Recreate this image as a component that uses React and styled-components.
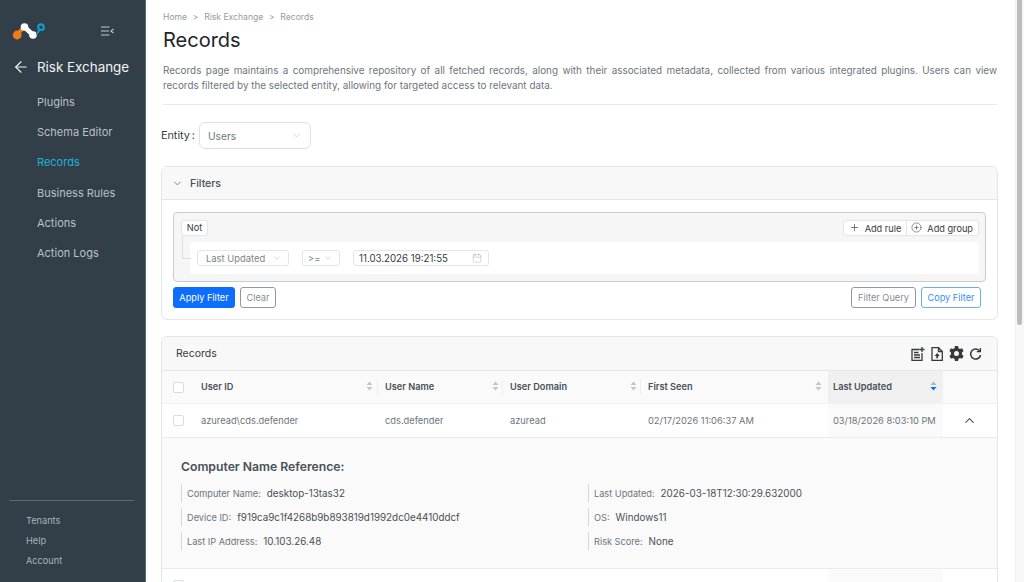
import React from "react";
import styled, { createGlobalStyle } from "styled-components";
import { ArrowLeft, ChevronDown, ChevronUp, Plus, CirclePlus, Calendar } from "lucide-react";

const Global = createGlobalStyle`
  html, body { margin: 0; padding: 0; height: 100%; overflow: hidden; }
  * { box-sizing: border-box; }
  body { font-family: Inter, "Liberation Sans", sans-serif; background: #fff; color: #495057; }
`;
const Shell = styled.div`position: relative; display: flex; height: 582px; width: 1024px; overflow: hidden;`;
const Side = styled.aside`
  width: 146px; flex: none; height: 100%; background: #323f49; border-right: 1px solid #5a6974;
  display: flex; flex-direction: column; padding-top: 20px;
`;
const Brand = styled.div`display: flex; align-items: center; height: 24px; padding-left: 12px; gap: 55px;`;
const Back = styled.div`
  display: flex; align-items: center; gap: 7px; margin-top: 11px; height: 24px; padding-left: 12px;
  color: #f1f3f4; font-size: 13.4px; font-weight: 400;
`;
const Nav = styled.nav`display: flex; flex-direction: column; margin-top: 8px;`;
const NavItem = styled.div`
  height: 30.2px; line-height: 30px; padding-left: 37px; font-size: 11px;
  color: ${p => (p.$active ? "#20b2dc" : "#b9c0c5")};
`;
const Foot = styled.div`
  margin: auto 11px 0 9px; border-top: 1px solid #5c6a74; padding: 10px 0 11px 17px;
  display: flex; flex-direction: column;
`;
const FootItem = styled.div`height: 20px; line-height: 20px; font-size: 9.2px; color: #aab2b8;`;
const Main = styled.main`flex: 1; height: 100%; overflow: hidden; padding: 0 19px 0 15px;`;
const ScrollTrack = styled.div`
  position: absolute; top: 0; right: 0; width: 9px; height: 100%; background: #f8f8f8; border-left: 1px solid #f0f0f0;
`;
const ScrollThumb = styled.div`
  width: 5px; height: 325px; margin-left: 1px; background: #bcbcbc; border-radius: 0 0 3px 3px;
`;
const Crumbs = styled.div`
  padding: 11px 0 0 2px; height: 25px; font-size: 8.6px; line-height: 12px; color: #959ca3;
  display: flex; gap: 5.7px;
`;
const Title = styled.h1`margin: 3px 0 0; font-size: 20px; line-height: 24px; font-weight: 400; color: #212529; padding-left: 2px;`;
const Desc = styled.p`
  margin: 11px 0 0 2px; padding: 0 0 10px 0; border-bottom: 1px solid #e6e8ea;
  font-size: 9.9px; line-height: 15px; color: #6c757d; text-align: justify; width: 834px; height: 42px;
`;
const EntityRow = styled.div`display: flex; align-items: center; margin-top: 17px; gap: 4px;`;
const EntityLabel = styled.label`font-size: 10.8px; color: #343a40; word-spacing: -1px;`;
const EntitySelect = styled.div`
  width: 112px; height: 27px; border: 1px solid #dfe2e5; border-radius: 6px; background: #fff;
  display: flex; align-items: center; justify-content: space-between; padding: 0 8px;
  font-size: 10.2px; color: #6c757d;
`;
const Card = styled.section`
  margin-top: ${p => p.$mt}px; width: 837px; border: 1px solid #e4e6e8; border-radius: 6px; background: #fff; overflow: hidden;
`;
const FilterHead = styled.div`
  height: 33px; background: #f8f8f8; border-bottom: 1px solid #e4e6e8;
  display: flex; align-items: center; gap: 7px; padding-left: 10px;
  font-size: 10.5px; font-weight: 500; color: #495057;
`;
const FilterBody = styled.div`padding: 12px 11px 11px;`;
const Builder = styled.div`
  position: relative; height: 70px; background: #f6f6f6; border: 1px solid #c9cccf; border-radius: 4px;
  padding: 7px 6px 0 7px;
`;
const BuilderTop = styled.div`display: flex; justify-content: space-between; align-items: flex-start;`;
const NotTag = styled.div`
  height: 16px; width: 27px; background: #fff; border: 1px solid #e3e5e7; border-radius: 3px;
  font-size: 9.2px; line-height: 14px; text-align: center; color: #343a40;
`;
const BtnPair = styled.div`display: flex; height: 16px; background: #fff; border: 1px solid #e3e5e7; border-radius: 3px;`;
const PairBtn = styled.div`
  display: flex; align-items: center; gap: 5px; padding: 0 5px 0 5px; font-size: 9.2px; color: #343a40;
  & + & { border-left: 1px solid #e3e5e7; padding-left: 4px; }
  & svg { margin-top: -2px; }
`;
const RuleRow = styled.div`
  position: relative; margin: 6px 0 0 9px; height: 32px; background: #fff; border-radius: 3px;
  display: flex; align-items: center; padding-left: 7px;
  &::before {
    content: ""; position: absolute; left: -8px; top: -6px; width: 8px; height: 22px;
    border-left: 1px solid #dcdfe2; border-bottom: 1px solid #dcdfe2;
  }
`;
const Sel = styled.div`
  width: ${p => p.$w}px; margin-right: ${p => p.$mr}px; height: 16px; border: 1px solid #e3e5e7; border-radius: 3px;
  display: flex; align-items: center; justify-content: space-between; padding: 0 6px 0 ${p => p.$pl}px;
  font-size: ${p => p.$dark ? 9.7 : 9.4}px; color: ${p => p.$dark ? "#343a40" : "#7b838a"}; background: #fff;
`;
const Actions = styled.div`display: flex; align-items: center; justify-content: space-between; margin-top: 5px; padding-right: 5px;`;
const ActionGroup = styled.div`display: flex; gap: 5px;`;
const Btn = styled.button`
  height: 21px; padding: 0; width: ${p => p.$w}px; border-radius: 3px; font-family: inherit; font-size: 9.2px;
  background: ${p => p.$kind === "primary" ? "#0d6efd" : "#fff"};
  color: ${p => p.$kind === "primary" ? "#fff" : p.$kind === "link" ? "#3c8cf6" : "#868e96"};
  border: 1px solid ${p => p.$kind === "primary" ? "#0d6efd" : p.$kind === "link" ? "#6ea8fe" : "#93989d"};
`;
const RecordsHead = styled.div`
  height: 34px; background: #f8f8f8; border-bottom: 1px solid #e4e6e8;
  display: flex; align-items: center; justify-content: space-between; padding: 0 15px 0 14px;
  font-size: 10.5px; color: #343a40;
`;
const Tools = styled.div`display: flex; align-items: center; gap: 5px;`;
const Grid = `display: grid; grid-template-columns: 39px 184px 125px 138px 180px 115px 1fr; align-items: center;`;
const HeadRow = styled.div`${Grid} height: 32px; background: #fafafa; font-size: 9.2px; font-weight: 600; color: #495057;`;
const BodyRow = styled.div`${Grid} height: 35px; background: #fff; border-top: 1px solid #f0f1f2; border-bottom: 1px solid #e9ebec; font-size: 9.3px; color: #6c757d;`;
const Th = styled.div`
  position: relative; height: 100%; display: flex; align-items: center; justify-content: space-between; padding-bottom: 2px;
  padding-right: ${p => p.$pr}px;
  background: ${p => p.$sorted ? "#f0f0f0" : "transparent"};
  padding-left: ${p => p.$sorted ? 5 : 0}px;
  ${p => p.$divided ? `&::after { content: ""; position: absolute; right: 7px; top: 8px; height: 16px; border-right: 1px solid #efefef; }` : ""}
`;
const Td = styled.div`
  height: 100%; display: flex; align-items: center;
  background: ${p => p.$sorted ? "#fafafa" : "transparent"};
  padding-left: ${p => p.$sorted ? 5 : 0}px; white-space: nowrap;
`;
const CheckCell = styled.div`display: flex; align-items: center; padding-left: 11px;`;
const Check = styled.span`display: block; width: 11px; height: 11px; border: 1px solid #d9dcdf; border-radius: 2px; background: #fff;`;
const Chevron = styled.div`display: flex; justify-content: center; padding-right: 2px; color: #495057;`;
const Detail = styled.div`background: #fafafa; height: 131px; padding: 22px 20px 0 19px; border-bottom: 1px solid #e9ebec;`;
const DetailTitle = styled.h3`margin: 0; font-size: 12.2px; line-height: 14px; font-weight: 600; color: #495057;`;
const Columns = styled.div`display: grid; grid-template-columns: 407px 1fr; margin-top: 10px;`;
const Col = styled.div`display: flex; flex-direction: column; gap: 6px;`;
const Field = styled.div`
  height: 18px; border-left: 1px solid #d4d7da; padding-left: 5px; display: flex; align-items: center; gap: 6px;
  font-size: 9.85px; color: #495057; white-space: nowrap;
`;
const FieldLabel = styled.span`color: #6c757d; font-size: 9.2px;`;
const Blank = styled.div`${Grid} height: 40px; background: #fff;`;
const BlankCheck = styled(CheckCell)`align-self: start; padding-top: 11px;`;
const BlankSorted = styled.div`grid-column: 6; height: 100%; background: #fafafa;`;

const Logo = () => (
  <svg width="34" height="24" viewBox="0 0 34 24">
    <path d="M5 15 L11 8" stroke="#f07d18" strokeWidth="3.6" strokeLinecap="round" />
    <circle cx="5.200" cy="15" r="4.400" fill="#f07d18" />
    <path d="M12.500 7 L21 15" stroke="#fff" strokeWidth="4.600" />
    <circle cx="12.500" cy="7" r="3.800" fill="#fff" />
    <circle cx="21" cy="15" r="3.800" fill="#fff" />
    <path d="M25 13.500 L28 9" stroke="#109bc8" strokeWidth="2.200" strokeLinecap="round" />
    <circle cx="29" cy="7.200" r="2.800" fill="#323f49" stroke="#109bc8" strokeWidth="2.200" />
  </svg>
);
const MenuSvg = styled.svg`margin-bottom: 3px;`;
const MenuIcon = () => (
  <MenuSvg width="13" height="10" viewBox="0 0 13 10" fill="none" stroke="#c4cace" strokeWidth="1.100">
    <path d="M0 1h8.500M0 5h8M0 9h8.500M12.500 2.800 10 5l2.500 2.200" />
  </MenuSvg>
);
const Sort = ({ active }) => (
  <svg width="7" height="10" viewBox="0 0 7 10">
    <path d="M3.500 0.500 6.500 4H.5z" fill={active ? "#adb5bd" : "#c2c6ca"} />
    <path d="M3.500 9.500 6.500 6H.5z" fill={active ? "#0d6efd" : "#c2c6ca"} />
  </svg>
);
const ListAdd = () => (
  <svg width="14" height="14" viewBox="0 0 14 14" fill="none" stroke="#343a40" strokeWidth="1.300">
    <path d="M8.500 2.500H1v11h10V6" />
    <path d="M3 5.500h4.500M3 8h6M3 10.500h6" />
    <path d="M11 0v5M8.500 2.500h5" />
  </svg>
);
const FileUp = () => (
  <svg width="14" height="14" viewBox="0 0 14 14" fill="none" stroke="#343a40" strokeWidth="1.300">
    <path d="M2 .7h6.500L12.300 4.500V13.300H2z" />
    <path d="M8.500 .7v3.800h3.800" />
    <path d="M7.200 6 4.600 9h1.700v2.300h1.800V9h1.700z" fill="#343a40" stroke="none" />
  </svg>
);
const Gear = () => (
  <svg width="15" height="15" viewBox="0 0 24 24" fill="#343a40">
    <path fillRule="evenodd" d="M14.500 0h-5l-.7 3.500a9 9 0 0 0-2.300 1.300L3.100 3.700.6 8l2.700 2.400a9 9 0 0 0 0 3.200L.6 16l2.500 4.300 3.400-1.100a9 9 0 0 0 2.300 1.300L9.500 24h5l.7-3.500a9 9 0 0 0 2.300-1.300l3.400 1.100 2.500-4.300-2.700-2.400a9 9 0 0 0 0-3.200L23.400 8l-2.500-4.300-3.400 1.100a9 9 0 0 0-2.300-1.300zM12 8a4 4 0 1 1 0 8 4 4 0 0 1 0-8z" />
  </svg>
);
const Refresh = () => (
  <svg width="13" height="14" viewBox="0 0 13 14" fill="none" stroke="#343a40" strokeWidth="1.500">
    <path d="M10.800 4.200A5 5 0 1 0 11.600 8" />
    <path d="M11.400 1v3.600H7.800" strokeWidth="1.300" />
  </svg>
);

const columns = [
  { label: "User ID", pr: 12, divided: true },
  { label: "User Name", pr: 11, divided: true },
  { label: "User Domain", pr: 11, divided: true },
  { label: "First Seen", pr: 6, divided: false },
];

export default function App() {
  return (
    <Shell>
      <Global />
      <Side>
        <Brand><Logo /><MenuIcon /></Brand>
        <Back><ArrowLeft size={18} strokeWidth={1.500} />Risk Exchange</Back>
        <Nav>
          {["Plugins", "Schema Editor", "Records", "Business Rules", "Actions", "Action Logs"].map(n => (
            <NavItem key={n} $active={n === "Records"}>{n}</NavItem>
          ))}
        </Nav>
        <Foot>
          {["Tenants", "Help", "Account"].map(n => <FootItem key={n}>{n}</FootItem>)}
        </Foot>
      </Side>
      <Main>
        <Crumbs><span>Home</span><span>&gt;</span><span>Risk Exchange</span><span>&gt;</span><span>Records</span></Crumbs>
        <Title>Records</Title>
        <Desc>Records page maintains a comprehensive repository of all fetched records, along with their associated metadata, collected from various integrated plugins. Users can view records filtered by the selected entity, allowing for targeted access to relevant data.</Desc>
        <EntityRow>
          <EntityLabel>Entity :</EntityLabel>
          <EntitySelect>Users<ChevronDown size={11} color="#a8aeb3" strokeWidth={1.200} /></EntitySelect>
        </EntityRow>
        <Card $mt={17}>
          <FilterHead><ChevronDown size={11} strokeWidth={1.500} />Filters</FilterHead>
          <FilterBody>
            <Builder>
              <BuilderTop>
                <NotTag>Not</NotTag>
                <BtnPair>
                  <PairBtn><Plus size={11} strokeWidth={1.400} />Add rule</PairBtn>
                  <PairBtn><CirclePlus size={11} strokeWidth={1.200} />Add group</PairBtn>
                </BtnPair>
              </BuilderTop>
              <RuleRow>
                <Sel $w={92} $mr={13} $pl={8}>Last Updated<ChevronDown size={10} color="#a8aeb3" strokeWidth={1.200} /></Sel>
                <Sel $w={38} $mr={13} $pl={5}>&gt;=<ChevronDown size={10} color="#a8aeb3" strokeWidth={1.200} /></Sel>
                <Sel $w={136} $mr={0} $pl={5} $dark>11.03.2026 19:21:55<Calendar size={10} color="#a8aeb3" strokeWidth={1.200} /></Sel>
              </RuleRow>
            </Builder>
            <Actions>
              <ActionGroup>
                <Btn $kind="primary" $w={62}>Apply Filter</Btn>
                <Btn $w={36}>Clear</Btn>
              </ActionGroup>
              <ActionGroup>
                <Btn $w={65}>Filter Query</Btn>
                <Btn $kind="link" $w={60}>Copy Filter</Btn>
              </ActionGroup>
            </Actions>
          </FilterBody>
        </Card>
        <Card $mt={16}>
          <RecordsHead>
            Records
            <Tools><ListAdd /><FileUp /><Gear /><Refresh /></Tools>
          </RecordsHead>
          <HeadRow>
            <CheckCell><Check /></CheckCell>
            {columns.map(c => <Th key={c.label} $pr={c.pr} $divided={c.divided}>{c.label}<Sort /></Th>)}
            <Th $sorted $pr={6}>Last Updated<Sort active /></Th>
            <div />
          </HeadRow>
          <BodyRow>
            <CheckCell><Check /></CheckCell>
            <Td>azuread\cds.defender</Td>
            <Td>cds.defender</Td>
            <Td>azuread</Td>
            <Td>02/17/2026 11:06:37 AM</Td>
            <Td $sorted>03/18/2026 8:03:10 PM</Td>
            <Chevron><ChevronUp size={15} strokeWidth={1.800} /></Chevron>
          </BodyRow>
          <Detail>
            <DetailTitle>Computer Name Reference:</DetailTitle>
            <Columns>
              <Col>
                <Field><FieldLabel>Computer Name:</FieldLabel>desktop-13tas32</Field>
                <Field><FieldLabel>Device ID:</FieldLabel>f919ca9c1f4268b9b893819d1992dc0e4410ddcf</Field>
                <Field><FieldLabel>Last IP Address:</FieldLabel>10.103.26.48</Field>
              </Col>
              <Col>
                <Field><FieldLabel>Last Updated:</FieldLabel>2026-03-18T12:30:29.632000</Field>
                <Field><FieldLabel>OS:</FieldLabel>Windows11</Field>
                <Field><FieldLabel>Risk Score:</FieldLabel>None</Field>
              </Col>
            </Columns>
          </Detail>
          <Blank><BlankCheck><Check /></BlankCheck><BlankSorted /></Blank>
        </Card>
      </Main>
      <ScrollTrack><ScrollThumb /></ScrollTrack>
    </Shell>
  );
}
